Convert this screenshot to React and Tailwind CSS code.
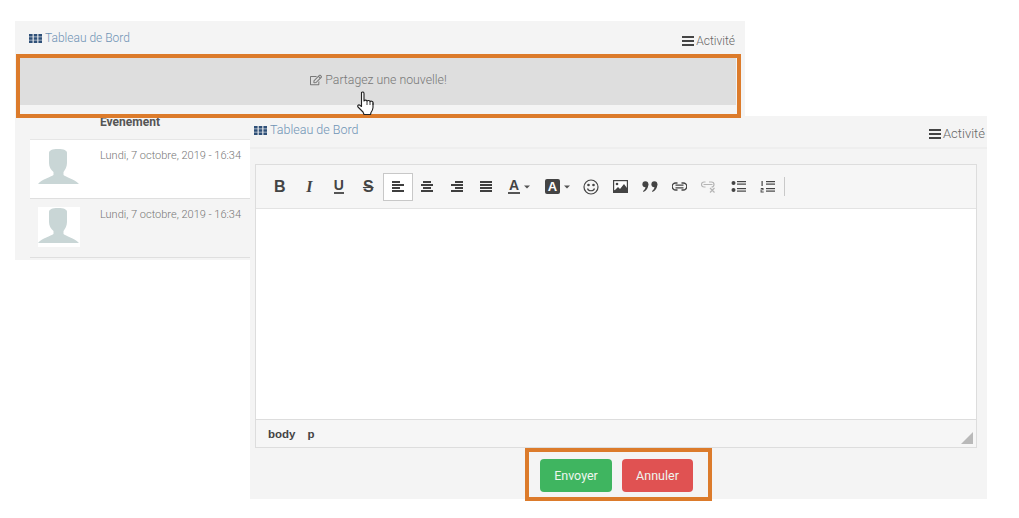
import React from "react";
import { FaRegEdit } from "react-icons/fa";

const Lines = ({ rows }) => (
  <svg width="14" height="14" viewBox="0 0 14 14" fill="#3f3f3f">
    {rows.map((r, i) => (
      <rect key={i} x={r[0]} y={1 + i * 3} width={r[1]} height="2" />
    ))}
  </svg>
);

const Btn = ({ children, className = "w-[29.5px]" }) => (
  <div className={`flex h-[28px] shrink-0 items-center justify-center ${className}`}>{children}</div>
);

const Caret = () => <svg width="6" height="4" viewBox="0 0 6 4" className="ml-[4px]"><path d="M0 .5h6L3 3.5z" fill="#555" /></svg>;

const Grid = () => (
  <svg width="13" height="9" viewBox="0 0 13 9" fill="#2f5078" className="mr-[3px]">
    {[0, 3.2, 6.400].map((y) =>
      [0, 4.700, 9.400].map((x) => <rect key={`${x}-${y}`} x={x} y={y} width="3.600" height="2.600" />)
    )}
  </svg>
);

const Bars = () => (
  <svg width="12" height="10" viewBox="0 0 12 10" fill="#444" className="mr-[2px]">
    <rect y="0" width="12" height="2" /><rect y="4" width="12" height="2" /><rect y="8" width="12" height="2" />
  </svg>
);

const Avatar = () => (
  <svg viewBox="0 0 42 40" className="h-[40px] w-[42px]" fill="#c9d6d6">
    <path d="M11 5c0-2.500 3-4 9-4s9 1.500 9 4v10c0 4-2 7-3.500 9v3c2 2 11 4 15.500 9H0c4-5 13-7 15.500-9v-3C13 22 11 19 11 15z" />
  </svg>
);

const Row = ({ white, pt }) => (
  <div className={`flex h-[59px] border-b border-[#dfdfdf] pl-[8px] ${pt} ${white ? "bg-white" : ""}`}>
    <div className="h-[40px] w-[42px] bg-white"><Avatar /></div>
    <div className="ml-[20px] pt-[1px] text-[11px] leading-[14px] text-[#777]">Lundi, 7 octobre, 2019 - 16:34</div>
  </div>
);

export default function App() {
  return (
    <div className="relative h-[518px] w-[1019px] overflow-hidden bg-white font-['Roboto',sans-serif] font-light antialiased">
      {/* Panneau arrière */}
      <div className="absolute left-[15px] top-[21px] h-[239px] w-[730px] bg-[#f4f4f4]">
        <div className="flex h-[34px] items-start justify-between pl-[14px] pr-[10px]">
          <div className="flex items-center pt-[10px] text-[12px] leading-[14px] text-[#6f93b5]">
            <Grid />Tableau de Bord
          </div>
          <div className="flex items-center pt-[13px] text-[12px] leading-[14px] text-[#666]">
            <Bars />Activité
          </div>
        </div>
        <div className="ml-[4px] flex h-[50px] w-[717px] items-center justify-center bg-[#dedede] pl-[2px] text-[12.300px] text-[#777]">
          <FaRegEdit className="mr-[3px] text-[12px]" />Partagez une nouvelle!
        </div>
        <div className="ml-[15px] w-[220px]">
          <div className="h-[35px] border-b border-[#e6e6e6] pl-[70px] pt-[9px] text-[12px] font-bold leading-[16px] text-[#555]">Evenement</div>
          <Row white pt="pt-[8px]" />
          <Row pt="pt-[8px]" />
        </div>
      </div>

      {/* Panneau avant */}
      <div className="absolute left-[250px] top-[116px] flex h-[383px] w-[737px] flex-col bg-[#f4f4f4]">
        <div className="flex h-[33px] shrink-0 items-start justify-between border-b-2 border-[#eeeeee] pl-[4px] pr-[2px]">
          <div className="flex items-center pt-[7px] text-[12.500px] leading-[14px] text-[#6f93b5]">
            <Grid />Tableau de Bord
          </div>
          <div className="flex items-center pt-[11px] text-[13px] leading-[14px] text-[#666]">
            <Bars />Activité
          </div>
        </div>
        <div className="ml-[5px] mt-[15px] flex h-[284px] w-[722px] flex-col border border-[#dddddd] bg-white">
          <div className="flex h-[44px] shrink-0 items-center border-b border-[#e3e3e3] bg-[#f6f6f6] pl-[9px] font-['Liberation_Sans',sans-serif] font-normal text-[#444]">
            <Btn><span className="text-[16px] font-bold">B</span></Btn>
            <Btn><span className="font-['Liberation_Serif',serif] text-[16px] font-bold italic">I</span></Btn>
            <Btn><span className="border-b-2 border-[#555] text-[14px] font-bold leading-[13px]">U</span></Btn>
            <Btn><span className="text-[16px] font-bold line-through">S</span></Btn>
            <Btn className="w-[29.5px] border border-[#c8c8c8] bg-white"><Lines rows={[[1,8],[1,12],[1,8],[1,12]]} /></Btn>
            <Btn><Lines rows={[[3,8],[1,12],[3,8],[1,12]]} /></Btn>
            <Btn><Lines rows={[[5,8],[1,12],[5,8],[1,12]]} /></Btn>
            <Btn><Lines rows={[[1,12],[1,12],[1,12],[1,12]]} /></Btn>
            <Btn className="w-[37px] pr-[1px]"><span className="border-b-2 border-[#555] px-[1px] text-[14px] font-bold leading-[13px]">A</span><Caret /></Btn>
            <Btn className="w-[38px] pl-[1px]"><span className="flex h-[15px] w-[15px] items-center justify-center rounded-[2px] bg-[#444] text-[13px] font-bold text-white">A</span><Caret /></Btn>
            <Btn>
              <svg width="16" height="16" viewBox="0 0 16 16" fill="none" stroke="#444" strokeWidth="1.200"><circle cx="8" cy="8" r="7" /><path d="M4.500 9.500c1 3 6 3 7 0" /><circle cx="5.500" cy="6" r=".7" fill="#444" /><circle cx="10.500" cy="6" r=".7" fill="#444" /></svg>
            </Btn>
            <Btn>
              <svg width="15" height="13" viewBox="0 0 15 13"><rect width="15" height="13" fill="#444" /><rect x="1.200" y="1.200" width="12.600" height="9" fill="#fff" /><circle cx="4" cy="4" r="1.300" fill="#444" /><path d="M1 11 5 7l2 2 4-5 3 4v4z" fill="#444" /></svg>
            </Btn>
            <Btn>
              <svg width="16" height="11" viewBox="0 0 16 11" fill="#444"><circle cx="3.400" cy="3.200" r="3" /><path d="M6.300 3.500C6.300 7 4.500 9.500 1.500 11l-.5-1c1.500-1 2.300-2.200 2.300-3.500z" /><circle cx="12.400" cy="3.200" r="3" /><path d="M15.300 3.500C15.300 7 13.500 9.500 10.500 11l-.5-1c1.500-1 2.300-2.200 2.300-3.500z" /></svg>
            </Btn>
            <Btn>
              <svg width="15" height="9" viewBox="0 0 15 9" fill="none" stroke="#444" strokeWidth="1.300"><path d="M5.500 1H3.700a3.500 3.500 0 0 0 0 7h1.800M9.500 1h1.800a3.500 3.500 0 0 1 0 7H9.500M3.500 3.200h8M3.500 5.800h8" /></svg>
            </Btn>
            <Btn>
              <svg width="15" height="12" viewBox="0 0 15 12" fill="none" stroke="#b5b5b5" strokeWidth="1.200"><path d="M4.500 1H3a2.300 2.300 0 0 0 0 5h1.500M8 1h2.500a2.300 2.300 0 0 1 0 5M2.500 3.500h9" /><path d="M9 7l4.500 4.500M13.500 7 9 11.500" /></svg>
            </Btn>
            <Btn>
              <svg width="15" height="13" viewBox="0 0 15 13" fill="#444"><circle cx="2.500" cy="3" r="2" /><circle cx="2.500" cy="10" r="2" /><rect x="6" y="1" width="9" height="1.200" /><rect x="6" y="3.500" width="9" height="1.200" /><rect x="6" y="8" width="9" height="1.200" /><rect x="6" y="10.500" width="9" height="1.200" /></svg>
            </Btn>
            <Btn>
              <svg width="15" height="13" viewBox="0 0 15 13" fill="#444"><rect x="1.500" y="1" width="1.200" height="5" /><path d="M.8 8h2.700v2.200H1.500v1.300h2.200v1H.6V9.500h2V9H.8z" /><rect x="6" y="1" width="9" height="1.200" /><rect x="6" y="3.500" width="9" height="1.200" /><rect x="6" y="8" width="9" height="1.200" /><rect x="6" y="10.500" width="9" height="1.200" /></svg>
            </Btn>
            <div className="ml-[1px] h-[19px] w-px bg-[#c9c9c9]" />
          </div>
          <div className="flex-1 bg-white" />
          <div className="relative flex h-[28px] shrink-0 items-center gap-[12px] border-t border-[#dddddd] bg-[#f6f6f6] pl-[12px] pt-[2px] font-['Liberation_Sans',sans-serif] text-[11.500px] font-bold text-[#444]">
            <span>body</span><span>p</span>
            <svg width="12" height="12" viewBox="0 0 12 12" className="absolute bottom-[3px] right-[3px]"><path d="M12 0v12H0z" fill="#b9b9b9" /></svg>
          </div>
        </div>
        <div className="mt-[11px] flex justify-center gap-[10px] pr-[4px] text-[12.500px] font-normal text-[#eef5ef]">
          <div className="flex h-[33px] w-[72px] items-center justify-center rounded-[4px] bg-[#3fb560] pt-[1px]">Envoyer</div>
          <div className="flex h-[33px] w-[71px] items-center justify-center rounded-[4px] bg-[#e05252] pt-[1px]">Annuler</div>
        </div>
      </div>

      {/* Cadres d'annotation */}
      <div className="pointer-events-none absolute left-[16px] top-[54px] h-[64px] w-[725px] border-4 border-[#dc7b2b]" />
      <div className="pointer-events-none absolute left-[525px] top-[448px] h-[53px] w-[187px] border-4 border-[#dc7b2b]" />

      {/* Curseur */}
      <svg width="20" height="25" viewBox="0 0 20 25" className="absolute left-[357px] top-[91px]">
        <path d="M4.500 1.500c1-1 2.500-.5 2.500 1V10c.5-1.200 3-1.200 3 .3.500-1.200 3-1 3 .5.500-1 3-.8 3 .7v5c0 2-1 3.500-2 5l-.5 2H7l-1-2.500-5-5c-.8-1 .2-2.500 1.500-2l2 1.500z" fill="#fff" stroke="#222" strokeWidth="1.100" strokeLinejoin="round" />
        <path d="M10 10.500V14M13 11v3M16 11.500V14" stroke="#222" strokeWidth=".9" fill="none" />
      </svg>
    </div>
  );
}
